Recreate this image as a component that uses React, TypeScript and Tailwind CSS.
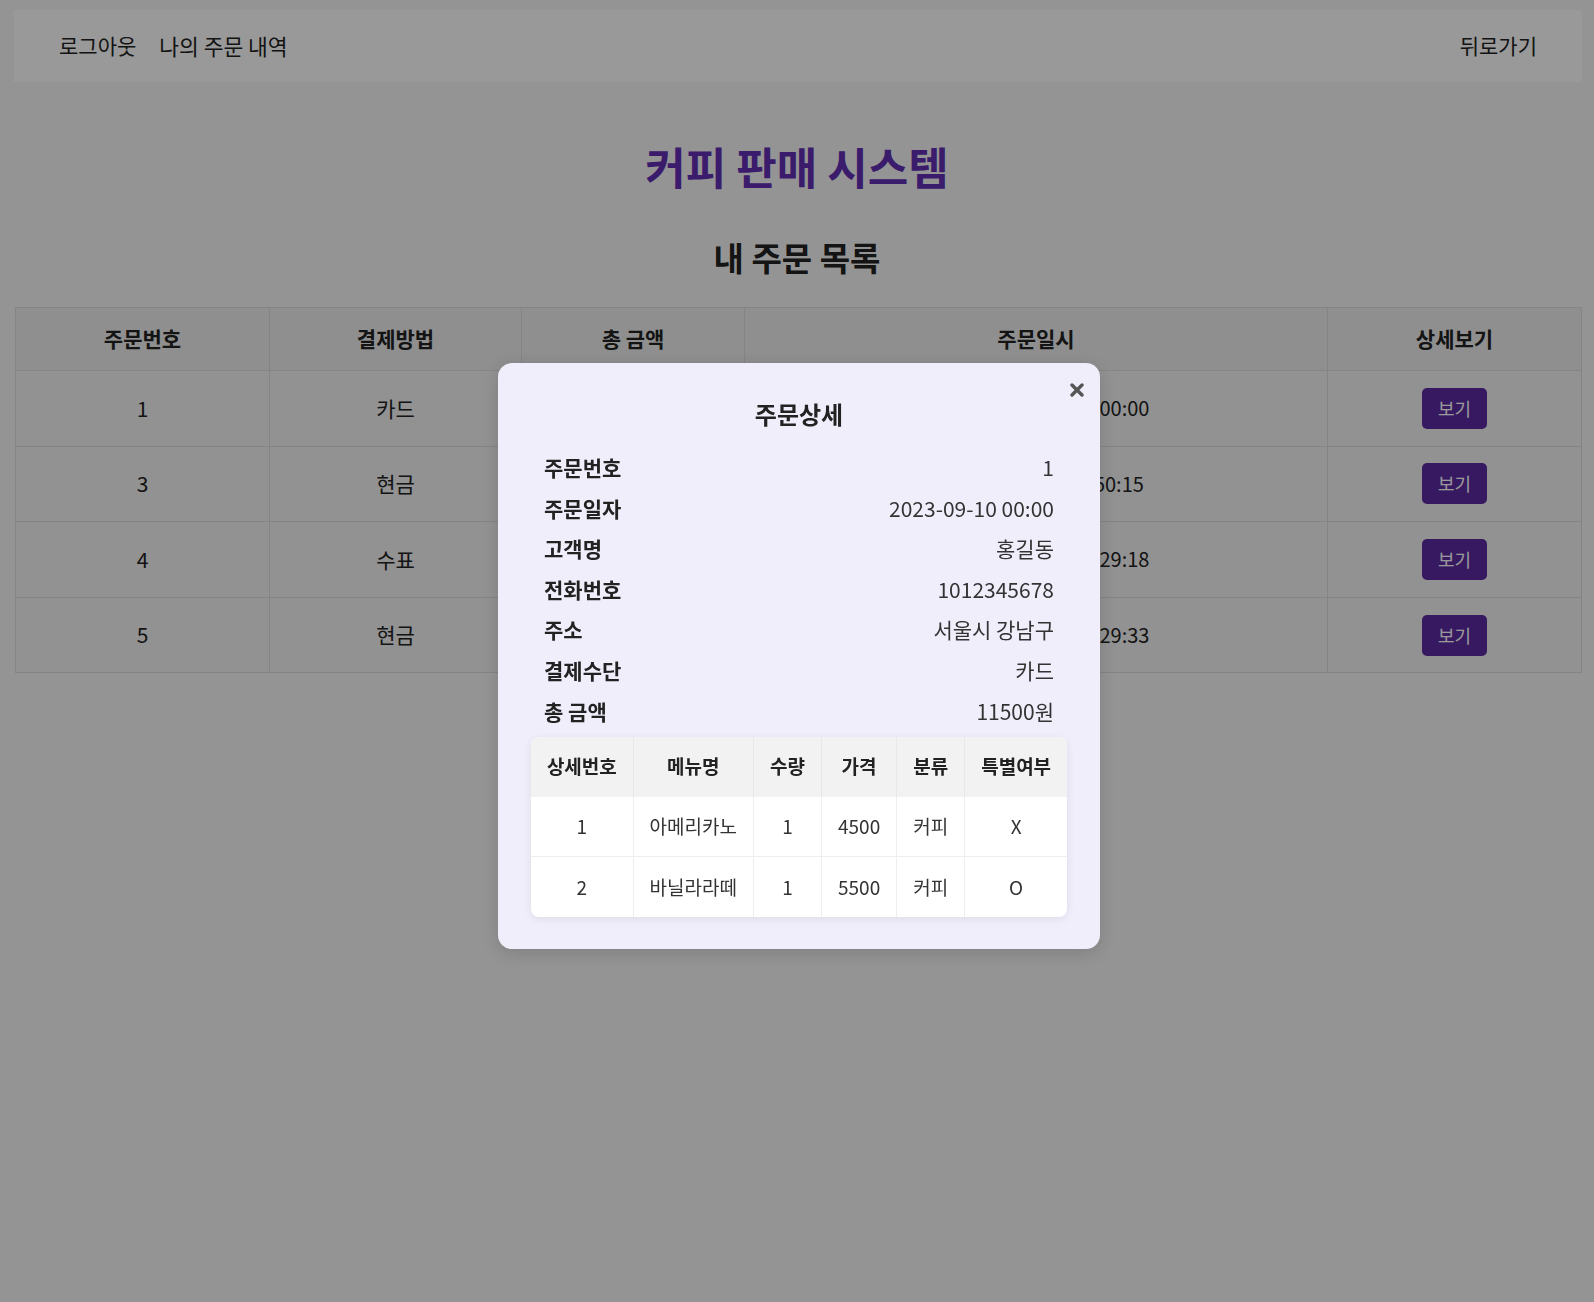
import React from 'react';

const font = "font-['Noto_Sans_CJK_KR','Noto_Sans',sans-serif]";

const orders = [
  { id: 1, pay: '카드', total: '11500원', date: '2023. 9. 10. 오전 12:00:00' },
  { id: 3, pay: '현금', total: '9000원', date: '2023. 9. 12. 오후 3:50:15' },
  { id: 4, pay: '수표', total: '4500원', date: '2023. 9. 13. 오전 10:29:18' },
  { id: 5, pay: '현금', total: '5500원', date: '2023. 9. 13. 오전 10:29:33' },
];

const info = [
  ['주문번호', '1'],
  ['주문일자', '2023-09-10 00:00'],
  ['고객명', '홍길동'],
  ['전화번호', '1012345678'],
  ['주소', '서울시 강남구'],
  ['결제수단', '카드'],
  ['총 금액', '11500원'],
];

const items = [
  { no: 1, name: '아메리카노', qty: 1, price: 4500, cat: '커피', special: 'X' },
  { no: 2, name: '바닐라라떼', qty: 1, price: 5500, cat: '커피', special: 'O' },
];

const OrderDetailModal: React.FC = () => {
  return (
    <div className="fixed inset-0 flex items-center justify-center bg-black/40">
      <div className="relative ml-[4px] mt-[10px] w-[602px] rounded-[14px] bg-[#f1eefc] px-[33px] pt-[35px] pb-[32px] shadow-[0_4px_20px_rgba(0,0,0,0.15)]">
        <button className="absolute right-[16px] top-[20px] flex h-[14px] w-[14px] items-center justify-center text-[#555]">
          <svg width="14" height="14" viewBox="0 0 14 14">
            <path d="M2 2 L12 12 M12 2 L2 12" stroke="currentColor" strokeWidth="3.4" strokeLinecap="round" />
          </svg>
        </button>
        <h3 className="text-center text-[24px] font-bold leading-[32px] text-[#222]">주문상세</h3>
        <div className="mt-[17px] px-[13px]">
          {info.map(([label, value]) => (
            <div key={label} className="flex h-[40.6px] items-center justify-between text-[21px]">
              <span className="font-bold text-[#222]">{label}</span>
              <span className="text-[#333]">{value}</span>
            </div>
          ))}
        </div>
        <div className="mt-[5px] overflow-hidden rounded-[8px] bg-white shadow-[0_2px_8px_rgba(0,0,0,0.08)]">
          <table className="w-full table-fixed border-collapse text-[19px] text-[#333]">
            <colgroup>
              <col className="w-[102px]" />
              <col className="w-[120px]" />
              <col className="w-[68px]" />
              <col className="w-[75px]" />
              <col className="w-[68px]" />
              <col className="w-[102px]" />
            </colgroup>
            <thead>
              <tr className="h-[60px] bg-[#f2f2f2]">
                {['상세번호', '메뉴명', '수량', '가격', '분류', '특별여부'].map((h, i) => (
                  <th key={h} className={`font-bold text-[#222] ${i > 0 ? 'border-l border-[#e8e8e8]' : ''}`}>
                    {h}
                  </th>
                ))}
              </tr>
            </thead>
            <tbody>
              {items.map((it, r) => (
                <tr key={it.no} className={`h-[60px] ${r > 0 ? 'border-t border-[#eeeeee]' : ''}`}>
                  <td className="text-center">{it.no}</td>
                  <td className="border-l border-[#eeeeee] text-center">{it.name}</td>
                  <td className="border-l border-[#eeeeee] text-center">{it.qty}</td>
                  <td className="border-l border-[#eeeeee] text-center">{it.price}</td>
                  <td className="border-l border-[#eeeeee] text-center">{it.cat}</td>
                  <td className="border-l border-[#eeeeee] text-center">{it.special}</td>
                </tr>
              ))}
            </tbody>
          </table>
        </div>
      </div>
    </div>
  );
};

export default function App() {
  return (
    <div className={`min-h-screen bg-[#f7f7f7] ${font} text-[#222]`}>
      <div className="pl-[14px] pr-[12px] pt-[10px]">
        <nav className="flex h-[72px] items-center justify-between bg-white px-[45px] text-[21px]">
          <div className="flex gap-[23px]">
            <a>로그아웃</a>
            <a className="text-[21.5px]">나의 주문 내역</a>
          </div>
          <a>뒤로가기</a>
        </nav>
      </div>

      <h1 className="mt-[56px] text-center text-[44px] font-bold leading-[56px] text-[#632fb5]">
        커피 판매 시스템
      </h1>
      <h2 className="mt-[43px] text-center text-[33px] font-bold leading-[40px]">내 주문 목록</h2>

      <div className="mt-[30px] pl-[15px] pr-[13px]">
        <table className="w-full table-fixed border-collapse text-[21px]">
          <colgroup>
            <col className="w-[254px]" />
            <col className="w-[252px]" />
            <col className="w-[223px]" />
            <col className="w-[583px]" />
            <col className="w-[254px]" />
          </colgroup>
          <thead>
            <tr className="h-[63px] bg-[#eeeeee]">
              {['주문번호', '결제방법', '총 금액', '주문일시', '상세보기'].map((h) => (
                <th key={h} className="border border-[#dddddd] font-bold">
                  {h}
                </th>
              ))}
            </tr>
          </thead>
          <tbody>
            {orders.map((o) => (
              <tr key={o.id} className="h-[75.6px] bg-[#f3f3f3]">
                <td className="border border-[#dddddd] text-center">{o.id}</td>
                <td className="border border-[#dddddd] text-center">{o.pay}</td>
                <td className="border border-[#dddddd] text-center">{o.total}</td>
                <td className="border border-[#dddddd] text-center text-[20px]">{o.date}</td>
                <td className="border border-[#dddddd] text-center">
                  <button className="h-[41px] w-[65px] rounded-[5px] bg-[#5c2ba4] text-[18px] text-white">보기</button>
                </td>
              </tr>
            ))}
          </tbody>
        </table>
      </div>

      <OrderDetailModal />
    </div>
  );
}
